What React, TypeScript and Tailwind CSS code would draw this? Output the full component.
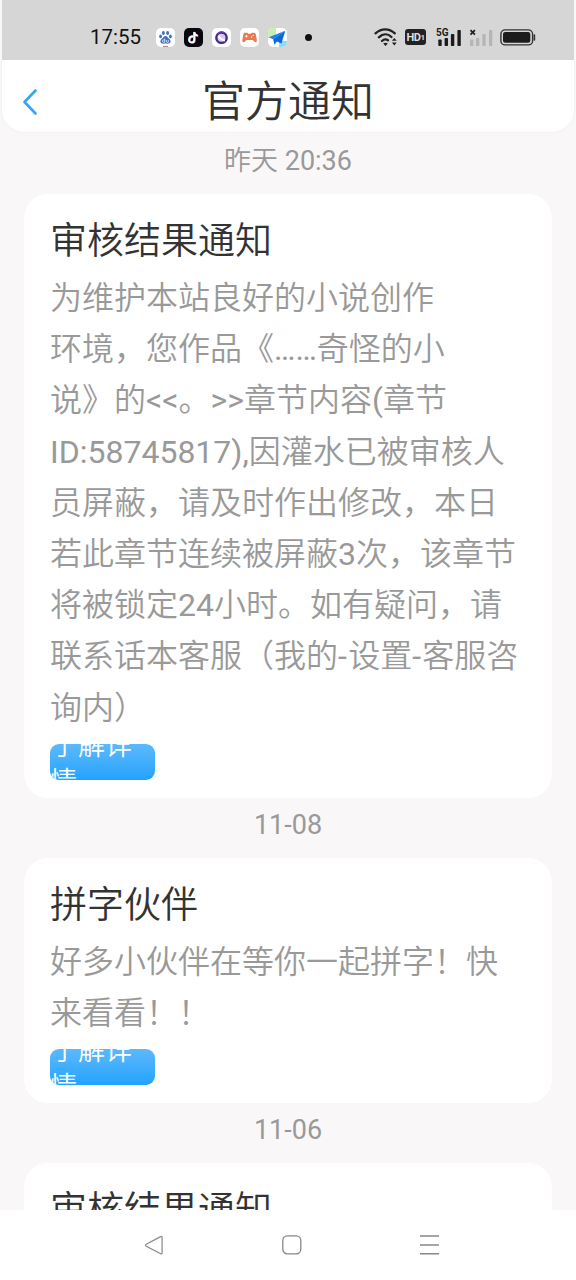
import type { ReactNode } from 'react';

interface Notice {
  id: number;
  time: string;
  title: string;
  lines: ReactNode[];
}

const dash = <span className="mr-[1.3px]">-</span>;

const notices: Notice[] = [
  {
    id: 1,
    time: '昨天 20:36',
    title: '审核结果通知',
    lines: [
      '为维护本站良好的小说创作',
      '环境，您作品《……奇怪的小',
      '说》的<<。>>章节内容(章节',
      'ID:58745817),因灌水已被审核人',
      '员屏蔽，请及时作出修改，本日',
      '若此章节连续被屏蔽3次，该章节',
      '将被锁定24小时。如有疑问，请',
      <>联系话本客服（我的{dash}设置{dash}客服咨</>,
      '询内）',
    ],
  },
  {
    id: 2,
    time: '11-08',
    title: '拼字伙伴',
    lines: ['好多小伙伴在等你一起拼字！快', '来看看！！'],
  },
  {
    id: 3,
    time: '11-06',
    title: '审核结果通知',
    lines: ['为维护本站良好的小说创作'],
  },
];

function AppBadge({ className, children }: { className: string; children: ReactNode }) {
  return (
    <span className={`block h-[19px] w-[19px] overflow-hidden rounded-[5px] ${className}`}>
      <svg viewBox="0 0 19 19" className="block h-full w-full" fill="none">
        {children}
      </svg>
    </span>
  );
}

function StatusBar() {
  return (
    <div className="mx-[2px] flex h-[60px] shrink-0 items-center bg-[#d6d6d6] pt-[14px] pl-[88px]">
      <span className="w-[66px] text-[20.5px] leading-[24px] text-[#111111]">17:55</span>
      <div className="flex gap-[9px]">
        <AppBadge className="bg-white">
          <g fill="#3f72bd">
            <ellipse cx="7.3" cy="5" rx="1.5" ry="2.1" />
            <ellipse cx="11.6" cy="5" rx="1.5" ry="2.1" />
            <ellipse cx="4.6" cy="8.4" rx="1.4" ry="1.9" />
            <ellipse cx="14.4" cy="8.4" rx="1.4" ry="1.9" />
            <path d="M9.5 8c1.6 0 2.1 1.4 3.3 2.5 1.3 1.2 2.2 2.2 1.6 3.8-.7 1.8-2.8 1.3-4.9 1.3s-4.2.5-4.9-1.3c-.6-1.6.3-2.6 1.6-3.8C7.4 9.4 7.9 8 9.5 8z" />
          </g>
          <path d="M8.7 10.6v3.7H7.5c-1.5 0-1.5-2.3 0-2.3h1.2M10.4 12v1.6c0 .6.3.7.7.7h1.2V12" stroke="#fff" strokeWidth=".7" />
          <path d="M7 18.4h5" stroke="#b04a4a" strokeWidth=".8" />
        </AppBadge>
        <AppBadge className="bg-[#08060e]">
          <path d="M9.4 8.5c-5-.4-5.4 6-1.7 6 1.7 0 2.7-1.2 2.7-2.8V4.2c.2 2 1.6 3.3 3.4 3.5" stroke="#46dfe0" strokeWidth="1.7" transform="translate(-.5 -.3)" />
          <path d="M9.4 8.5c-5-.4-5.4 6-1.7 6 1.7 0 2.7-1.2 2.7-2.8V4.2c.2 2 1.6 3.3 3.4 3.5" stroke="#ef5673" strokeWidth="1.7" transform="translate(.5 .4)" />
          <path d="M9.4 8.5c-5-.4-5.4 6-1.7 6 1.7 0 2.7-1.2 2.7-2.8V4.2c.2 2 1.6 3.3 3.4 3.5" stroke="#fff" strokeWidth="1.7" />
        </AppBadge>
        <AppBadge className="bg-white">
          <circle cx="9.5" cy="9.7" r="5.2" fill="#dcc5fa" stroke="#3f2c82" strokeWidth="2.4" />
          <path d="M6.5 8c1.5 2.5 3.5 4 6.5 4.4" stroke="#fff" strokeWidth="2" />
          <path d="M5 6.5c2-3 6-3.5 8.2-1.2" stroke="#7855bd" strokeWidth="1" />
        </AppBadge>
        <AppBadge className="bg-white">
          <path d="M5.2 4.7h2.2l1 1h2.4l1-1h2.1c1 0 1.7.7 2 1.700l1 5.900c.2 1.700-1.600 2.500-2.700 1.300l-1.400-1.500H6.400L5 13.600c-1.100 1.200-2.900.4-2.700-1.300l1-5.900c.2-1 .9-1.700 1.900-1.700z" fill="#e97a50" />
          <path d="M6.500 6.900v2.600M5.200 8.200h2.600" stroke="#fff" strokeWidth=".8" />
          <circle cx="11.6" cy="9" r=".7" fill="#fff" />
          <circle cx="13.2" cy="7.4" r=".7" fill="#fff" />
        </AppBadge>
        <AppBadge className="bg-white">
          <path d="M0 0h8v10H0z" fill="#c9efae" />
          <path d="M11 13h8v6h-8z" fill="#8bdcf8" />
          <path d="M17.3 2.8.8 9.200l4.400 2.100z" fill="#1684f2" />
          <path d="M17.3 2.8 5.200 11.300l1.200 5.400 2.500-3.300 4.600 2.100z" fill="#0a69dc" />
        </AppBadge>
      </div>
      <span className="ml-[18px] h-[7px] w-[7px] rounded-full bg-[#111111]" />

      <svg viewBox="0 0 24 20" className="ml-[62px] h-[20px] w-[24px]" fill="none">
        <g stroke="#222" strokeWidth="2.3" strokeLinecap="round">
          <path d="M1.500 6.300c6-5.300 13.500-5.300 19.300 0" />
          <path d="M4.800 10.300c4-3.800 9-3.800 12.700-.3" />
          <path d="M8 14c2-1.900 4.200-1.900 6-.7" />
        </g>
        <path d="M11.500 19l-2.300-2.500c1.300-1 3.300-1 4.600 0z" fill="#222" />
        <path d="M17.900 13.800l2.400-2.800 2.400 2.800zM17.900 15.600l2.400 2.800 2.400-2.800z" fill="#222" />
      </svg>
      <span className="ml-[7px] flex h-[16px] w-[21px] items-center justify-center rounded-[3px] bg-[#222222] text-[11px] leading-none font-bold tracking-[-0.5px] text-[#dddddd]">
        HD<span className="pt-[2px] text-[8px]">1</span>
      </span>
      <svg viewBox="0 0 27 20" className="ml-[10px] h-[20px] w-[27px]" fill="#1c1c1c">
        <text x="0" y="8.5" fontSize="10.5" fontWeight="700" textLength="12.5" lengthAdjust="spacingAndGlyphs">5G</text>
        <rect x="2.3" y="12.5" width="3.4" height="6.5" rx=".8" />
        <rect x="8.6" y="11" width="3.4" height="8" rx=".8" />
        <rect x="14.9" y="7" width="3.4" height="12" rx=".8" />
        <rect x="21.4" y="3" width="3.4" height="16" rx=".8" />
      </svg>
      <svg viewBox="0 0 24 20" className="ml-[6px] h-[20px] w-[24px]" fill="#b5b5b5">
        <path d="M1.500 3.200l4.400 4.400M5.900 3.200L1.500 7.600" stroke="#222" strokeWidth="1.8" />
        <rect x="1" y="12.5" width="3.3" height="6.5" rx=".8" />
        <rect x="7" y="11" width="3.3" height="8" rx=".8" />
        <rect x="13.3" y="7" width="3.3" height="12" rx=".8" />
        <rect x="20" y="3" width="3.3" height="16" rx=".8" />
      </svg>
      <svg viewBox="0 0 36 17" className="ml-[7px] h-[17px] w-[36px]" fill="none">
        <rect x=".9" y=".9" width="31.7" height="15" rx="4.2" stroke="#333" strokeWidth="1.4" />
        <rect x="3" y="3" width="27.3" height="10.8" rx="2.2" fill="#1c1c1c" />
        <path d="M34.400 6v5" stroke="#333" strokeWidth="1.6" strokeLinecap="round" />
      </svg>
    </div>
  );
}

function NoticeCard({ notice }: { notice: Notice }) {
  return (
    <section>
      <p className="flex h-[60px] items-center justify-center pb-[5px] text-[27px] leading-none text-[#999999]">
        {notice.time}
      </p>
      <article className="mx-[24px] rounded-[24px] bg-white px-[26px] pt-[22px] pb-[18px]">
        <h2 className="h-[52px] text-[37px] leading-[52px] text-[#333333]">{notice.title}</h2>
        <div className="mt-[5px] mb-[10px] text-[32px] leading-[51.2px] whitespace-nowrap text-[#999999]">
          {notice.lines.map((line, i) => (
            <p key={i}>{line}</p>
          ))}
        </div>
        {/* label is wider than the button and gets clipped */}
        <button className="block h-[36px] w-[105px] overflow-hidden rounded-[9px] bg-linear-to-b from-[#5bb9fb] to-[#1fa3ff] text-left text-white">
          <span className="-mt-[16px] block text-[27px] leading-[36px] whitespace-nowrap">
            <span className="block pl-[1px]">了解详</span>
            <span className="block">情</span>
          </span>
        </button>
      </article>
    </section>
  );
}

export default function App() {
  return (
    <div className="flex h-[1280px] w-[576px] flex-col overflow-hidden bg-[#f9f7f8] font-[Roboto,'Noto_Sans_CJK_SC_DemiLight','Noto_Sans_CJK_SC',sans-serif]" lang="zh-CN">
      <StatusBar />
      <header className="mx-[2px] flex h-[72px] shrink-0 items-center rounded-b-[22px] bg-white pt-[12px] shadow-[0_0_2px_rgba(0,0,0,0.08)] [clip-path:inset(0_-3px_-3px_-3px)]">
        <svg viewBox="0 0 20 30" className="ml-[19px] h-[30px] w-[20px]" fill="none">
          <path d="M14.500 3.500 3.500 15l11 11.500" stroke="#36a5f0" strokeWidth="2.6" strokeLinecap="round" strokeLinejoin="round" />
        </svg>
        <h1 className="flex-1 pr-[39px] text-center text-[43px] leading-[60px] text-[#333333]">官方通知</h1>
      </header>
      <main className="flex-1 overflow-hidden pt-[2px]">
        {notices.map((notice) => (
          <NoticeCard key={notice.id} notice={notice} />
        ))}
      </main>
      <nav className="flex h-[70px] shrink-0 items-center bg-white pl-[143px]">
        <svg viewBox="0 0 22 22" className="h-[22px] w-[22px]" fill="none">
          <path d="M19.100 3.300v15.800c0 .8-.7 1.100-1.400.7L3.200 12.200c-1-.6-1-1.500 0-2L17.700 2.600c.7-.4 1.400-.1 1.400.7z" stroke="#888" strokeWidth="1.2" />
        </svg>
        <svg viewBox="0 0 22 22" className="ml-[116px] h-[22px] w-[22px]" fill="none">
          <rect x="1.8" y="1.8" width="18" height="18" rx="4.5" stroke="#888" strokeWidth="1.3" />
        </svg>
        <svg viewBox="0 0 22 22" className="ml-[115px] h-[22px] w-[22px]" fill="none">
          <path d="M2 2h19M2 11h19M2 19.700h19" stroke="#888" strokeWidth="1.5" />
        </svg>
      </nav>
    </div>
  );
}
